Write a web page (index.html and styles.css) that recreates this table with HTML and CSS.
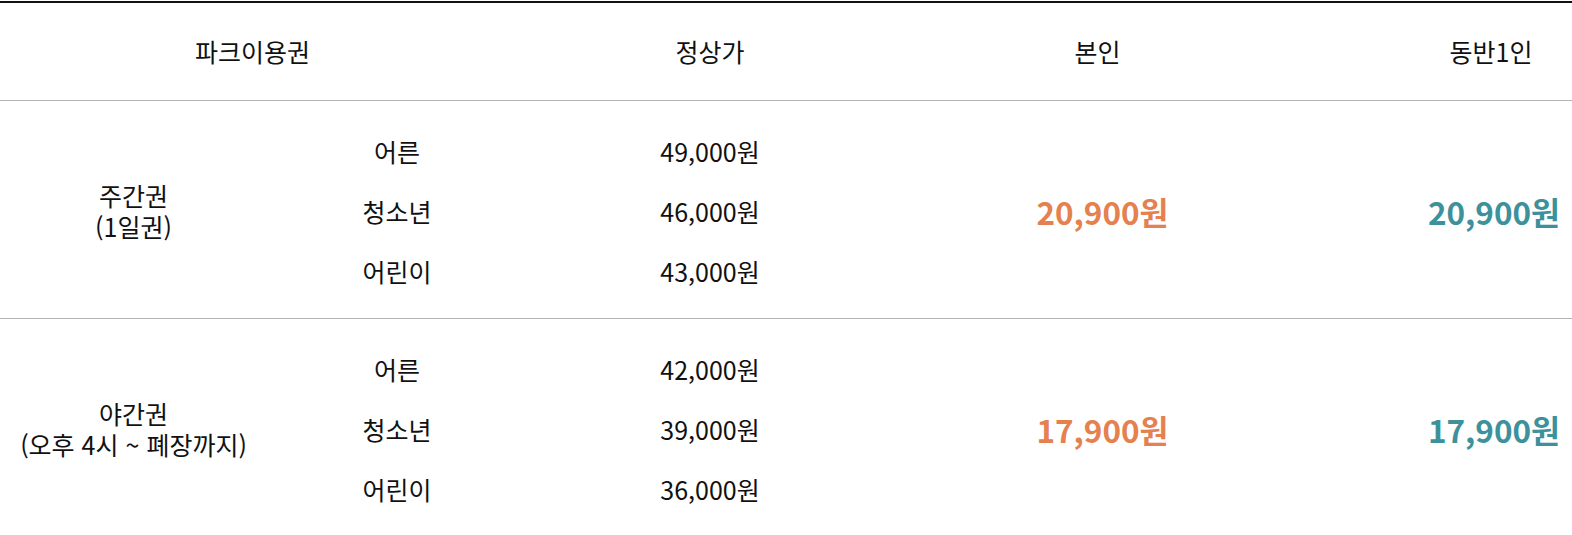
FILE: index.html
```html
<!DOCTYPE html>
<html lang="ko">
<head>
<meta charset="utf-8">
<title>파크이용권 요금</title>
<link rel="stylesheet" href="styles.css">
</head>
<body>
<div class="frame">
  <div class="price-table">
    <div class="row head">
      <div class="cell">파크이용권</div>
      <div class="cell">정상가</div>
      <div class="cell">본인</div>
      <div class="cell">동반1인</div>
    </div>
    <div class="row body">
      <div class="cell ticket"><span class="tl">주간권</span><span class="tl">(1일권)</span></div>
      <div class="cell lines">
        <div class="line"><span class="who">어른</span><span class="normal">49,000원</span></div>
        <div class="line"><span class="who">청소년</span><span class="normal">46,000원</span></div>
        <div class="line"><span class="who">어린이</span><span class="normal">43,000원</span></div>
      </div>
      <div class="cell price self">20,900원</div>
      <div class="cell price mate">20,900원</div>
    </div>
    <div class="row body last">
      <div class="cell ticket"><span class="tl">야간권</span><span class="tl">(오후 4시 ~ 폐장까지)</span></div>
      <div class="cell lines">
        <div class="line"><span class="who">어른</span><span class="normal">42,000원</span></div>
        <div class="line"><span class="who">청소년</span><span class="normal">39,000원</span></div>
        <div class="line"><span class="who">어린이</span><span class="normal">36,000원</span></div>
      </div>
      <div class="cell price self">17,900원</div>
      <div class="cell price mate">17,900원</div>
    </div>
  </div>
</div>
</body>
</html>
```
FILE: styles.css
```css
html, body {
  margin: 0;
  padding: 0;
  background: #fff;
  overflow: hidden;
}
body {
  font-family: "Noto Sans CJK KR", "Noto Sans", sans-serif;
  color: #111;
  font-size: 25px;
}
.frame {
  width: 1572px;
  overflow: hidden;
  padding-top: 1px;
}
.price-table {
  width: 1702px;
  border-top: 2px solid #111;
}
.row {
  display: grid;
  border-bottom: 1px solid #b4b4b4;
}
.head {
  grid-template-columns: 505px 410px 365px 422px;
  height: 98px;
  padding-bottom: 2px;
  box-sizing: border-box;
  align-items: center;
}
.head .cell {
  text-align: center;
}
.body {
  grid-template-columns: 267px 648px 365px 422px;
  padding: 20px 0 17px;
  align-items: center;
}
.ticket {
  display: flex;
  flex-direction: column;
  align-items: center;
  text-align: center;
}
.tl {
  display: block;
  height: 31px;
  line-height: 31px;
}
.lines {
  display: flex;
  flex-direction: column;
}
.line {
  display: grid;
  grid-template-columns: 238px 410px;
  height: 60px;
  align-items: center;
}
.who {
  text-align: center;
  padding-left: 22px;
}
.normal {
  text-align: center;
}
.price {
  text-align: center;
  font-size: 31.5px;
  font-weight: 700;
  padding-bottom: 1px;
}
.self {
  color: #e5804f;
  padding-left: 10px;
}
.mate {
  color: #3d919b;
  padding-left: 6px;
}
.last {
  border-bottom: none;
}
```
